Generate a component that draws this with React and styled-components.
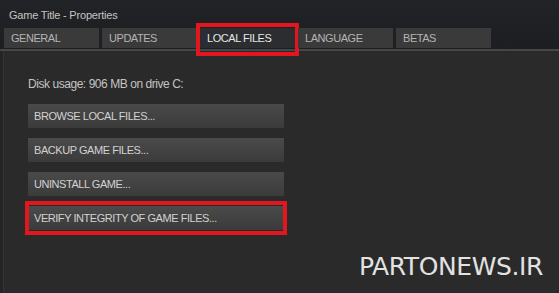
import * as React from 'react'
import styled, { createGlobalStyle } from 'styled-components'

const GlobalStyle = createGlobalStyle`
  html, body {
    margin: 0;
    padding: 0;
    background: #2a2a2a;
  }
  * { box-sizing: border-box; }
`

const StyledWindow = styled.div`
  position: relative;
  width: 559px;
  height: 293px;
  display: flex;
  flex-direction: column;
  background: #2a2a2a;
  font-family: "Liberation Sans", Arial, sans-serif;
  overflow: hidden;
`
const StyledHeader = styled.div`
  background: linear-gradient(to bottom, #222327, #1d1e21);
  border-bottom: 2px solid #464646;
`
const StyledTitle = styled.div`
  height: 28px;
  padding: 8px 0 0 9px;
  font-size: 11px;
  letter-spacing: -0.2px;
  color: #c4c4c4;
  line-height: 14px;
`
const StyledTabRow = styled.div`
  display: flex;
  gap: 3px;
  padding-left: 4px;
  height: 21px;
`
const StyledTab = styled.div`
  position: relative;
  width: 95px;
  height: 20px;
  padding: 4px 0 0 7px;
  font-size: 11px;
  letter-spacing: -0.45px;
  line-height: 12px;
  color: ${(props) => (props.active ? '#e6e6e6' : '#b4b4b4')};
  background: ${(props) => (props.active ? '#2c2d30' : '#3a3a3a')};

  &::after {
    display: ${(props) => (props.marked ? 'block' : 'none')};
    content: "";
    position: absolute;
    top: -5px;
    left: -4px;
    right: -4px;
    bottom: -8px;
    border: 4px solid #e1161f;
  }
`
const StyledBody = styled.div`
  flex: 1;
  display: flex;
`
const StyledGutter = styled.div`
  width: 4px;
  background: #252525;
  border-right: 1px solid #353535;
`
const StyledPanel = styled.div`
  flex: 1;
  padding: 26px 0 0 24px;
  display: flex;
  flex-direction: column;
  gap: 10px;
`
const StyledUsage = styled.div`
  font-size: 12px;
  letter-spacing: -0.45px;
  line-height: 14px;
  color: #c4c4c4;
  margin-bottom: 3px;
`
const StyledButton = styled.div`
  position: relative;
  width: 256px;
  height: 24px;
  padding: 6px 0 0 6px;
  font-size: 11px;
  letter-spacing: -0.45px;
  line-height: 12px;
  color: #d2d2d2;
  background: linear-gradient(to bottom, #4a4a4a, #3b3b3b);

  &::after {
    display: ${(props) => (props.marked ? 'block' : 'none')};
    content: "";
    position: absolute;
    top: -5px;
    left: -3px;
    right: -3px;
    bottom: -5px;
    border: 4px solid #e1161f;
  }
`
const StyledWatermark = styled.div`
  position: absolute;
  right: 16px;
  bottom: 12px;
  font-family: "DejaVu Sans", Verdana, sans-serif;
  font-size: 25px;
  letter-spacing: -0.4px;
  color: #e2e2e2;
`

const tabs = ['GENERAL', 'UPDATES', 'LOCAL FILES', 'LANGUAGE', 'BETAS']
const actions = [
  'BROWSE LOCAL FILES...',
  'BACKUP GAME FILES...',
  'UNINSTALL GAME...',
  'VERIFY INTEGRITY OF GAME FILES...',
]

const App = () => {
  return (
    <StyledWindow>
      <GlobalStyle />
      <StyledHeader>
        <StyledTitle>Game Title - Properties</StyledTitle>
        <StyledTabRow>
          {tabs.map((tab) => (
            <StyledTab key={tab} active={tab === 'LOCAL FILES'} marked={tab === 'LOCAL FILES'}>
              {tab}
            </StyledTab>
          ))}
        </StyledTabRow>
      </StyledHeader>
      <StyledBody>
        <StyledGutter />
        <StyledPanel>
          <StyledUsage>Disk usage: 906 MB on drive C:</StyledUsage>
          {actions.map((label, i) => (
            <StyledButton key={label} marked={i === actions.length - 1}>
              {label}
            </StyledButton>
          ))}
        </StyledPanel>
      </StyledBody>
      <StyledWatermark>PARTONEWS.IR</StyledWatermark>
    </StyledWindow>
  )
}

export default App
